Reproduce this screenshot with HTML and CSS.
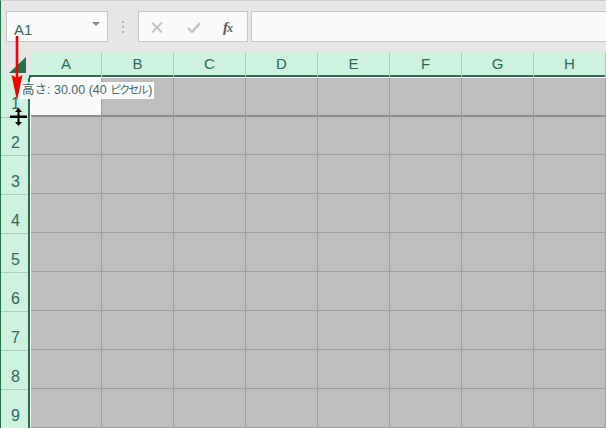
FILE: index.html
```html
<!DOCTYPE html>
<html lang="ja">
<head>
<meta charset="utf-8">
<title>Excel</title>
<link rel="stylesheet" href="styles.css">
</head>
<body>
<div class="app">
  <div class="formula-bar">
    <div class="name-box"><span>A1</span><i class="caret"></i></div>
    <svg class="grip" width="3" height="12" viewBox="0 0 3 12"><path d="M0 0h2v2H0zM0 5h2v2H0zM0 10h2v2H0z" fill="#b4b4b4"/></svg>
    <div class="fx-buttons">
      <svg class="cancel" width="12" height="11" viewBox="0 0 12 11"><path d="M1 .5 11 10.500M11 .5 1 10.500" stroke="#c4c4c4" stroke-width="2" fill="none"/></svg>
      <svg class="enter" width="14" height="11" viewBox="0 0 14 11"><path d="M1 6 5 10 13 1" stroke="#c4c4c4" stroke-width="2.400" fill="none"/></svg>
      <span class="fx">f<span class="fx-x">x</span></span>
    </div>
    <div class="formula-input"></div>
  </div>
  <div class="sheet">
    <div class="corner"><svg width="17" height="16" viewBox="0 0 17 16"><path d="M17 0V16H0Z" fill="#217346"/></svg></div>
    <div class="col">A</div><div class="col">B</div><div class="col">C</div><div class="col">D</div><div class="col">E</div><div class="col">F</div><div class="col">G</div><div class="col">H</div>

    <div class="row first">1</div>
    <div class="cell active r1"></div><div class="cell r1"></div><div class="cell r1"></div><div class="cell r1"></div><div class="cell r1"></div><div class="cell r1"></div><div class="cell r1"></div><div class="cell r1"></div>

    <div class="row">2</div>
    <div class="cell"></div><div class="cell"></div><div class="cell"></div><div class="cell"></div><div class="cell"></div><div class="cell"></div><div class="cell"></div><div class="cell"></div>
    <div class="row">3</div>
    <div class="cell"></div><div class="cell"></div><div class="cell"></div><div class="cell"></div><div class="cell"></div><div class="cell"></div><div class="cell"></div><div class="cell"></div>
    <div class="row">4</div>
    <div class="cell"></div><div class="cell"></div><div class="cell"></div><div class="cell"></div><div class="cell"></div><div class="cell"></div><div class="cell"></div><div class="cell"></div>
    <div class="row">5</div>
    <div class="cell"></div><div class="cell"></div><div class="cell"></div><div class="cell"></div><div class="cell"></div><div class="cell"></div><div class="cell"></div><div class="cell"></div>
    <div class="row">6</div>
    <div class="cell"></div><div class="cell"></div><div class="cell"></div><div class="cell"></div><div class="cell"></div><div class="cell"></div><div class="cell"></div><div class="cell"></div>
    <div class="row">7</div>
    <div class="cell"></div><div class="cell"></div><div class="cell"></div><div class="cell"></div><div class="cell"></div><div class="cell"></div><div class="cell"></div><div class="cell"></div>
    <div class="row">8</div>
    <div class="cell"></div><div class="cell"></div><div class="cell"></div><div class="cell"></div><div class="cell"></div><div class="cell"></div><div class="cell"></div><div class="cell"></div>
    <div class="row">9</div>
    <div class="cell"></div><div class="cell"></div><div class="cell"></div><div class="cell"></div><div class="cell"></div><div class="cell"></div><div class="cell"></div><div class="cell"></div>
  </div>
  <div class="tooltip">高さ: 30.00 (40 <span class="kana">ピクセル</span>)</div>
  <svg class="arrow" width="12" height="65" viewBox="0 0 12 65"><path d="M4.700 0h2.600v42h-2.600z" fill="#f00000"/><path d="M.5 39 6 64.500 11.500 39 6 42Z" fill="#f00000"/></svg>
  <svg class="cursor" width="17" height="18" viewBox="0 0 17 18"><path d="M8.500 0 12 4H9.500V7.500H17V10H9.500V14H12L8.500 18 5 14H7.500V10H0V7.500H7.500V4H5Z" fill="#000"/></svg>
</div>
</body>
</html>
```
FILE: styles.css
```css
* { box-sizing: border-box; }
html, body { margin: 0; padding: 0; }
body { width: 606px; height: 428px; overflow: hidden; background: #e6e6e6; font-family: "Liberation Sans", "Noto Sans CJK JP", sans-serif; }
.app { position: relative; width: 606px; height: 428px; overflow: hidden; border-top: 1px solid #cfcfcf; border-left: 1px solid #217346; }
.formula-bar { height: 51px; display: flex; align-items: flex-start; padding: 10px 0 0 5px; }
.name-box { width: 102px; height: 31px; background: #fafafa; border: 1px solid #c6c6c6; display: flex; align-items: center; justify-content: space-between; padding: 5px 8px 0 7px; color: #3a6a5c; font-size: 15px; }
.caret { width: 0; height: 0; border-left: 4px solid transparent; border-right: 4px solid transparent; border-top: 4px solid #8a8a8a; margin-top: -10px; margin-right: -1px; }
.grip { margin: 10px 13px 0 14px; flex: none; }
.fx-buttons { width: 110px; height: 31px; background: #fafafa; border: 1px solid #c6c6c6; display: flex; align-items: center; padding: 1px 0 0 12px; }
.enter { margin-left: 24px; }
.fx { margin-left: 22px; font-family: "Liberation Serif", serif; font-style: italic; font-weight: 700; font-size: 15px; color: #5a5a5a; line-height: 1; }
.fx-x { font-size: 12px; margin-left: -1px; }
.formula-input { flex: 1; height: 31px; margin-left: 3px; background: #fafafa; border: 1px solid #c6c6c6; border-right: 0; }
.sheet { display: grid; grid-template-columns: 30px 71px repeat(7, 72px); grid-template-rows: 26px 39px 38px repeat(7, 39px); background: #bebebe; }
.corner { background: linear-gradient(#217346, #217346) right bottom / 2px 3px no-repeat, linear-gradient(#cff1df, #cff1df) left bottom / 100% 3px no-repeat, #e6e6e6; display: flex; justify-content: flex-end; align-items: flex-start; padding: 5px 5px 0 0; }
.col { background: #cff1df; border-right: 1px solid #b5c9bd; border-bottom: 1px solid #fff; box-shadow: inset 0 -2px 0 #2c6e4d; color: #2b6a5c; font-size: 15px; display: flex; align-items: center; justify-content: center; padding-bottom: 2px; }
.row { background: #cff1df; border-right: 1px solid #fff; box-shadow: inset -2px 0 0 #217346, inset 0 1px 0 #b5c9bd; color: #2b6a5c; font-size: 16px; display: flex; align-items: center; justify-content: center; padding: 14px 0 0 0; }
.row.first { box-shadow: inset -2px 0 0 #217346; padding-top: 12px; }
.cell { background: #bebebe; border-right: 1px solid #9e9e9e; border-bottom: 1px solid #9e9e9e; }
.cell.r1 { border-bottom: 2px solid #8f8f8f; }
.cell.active { background: #fafafa; }
.tooltip { position: absolute; left: 19px; top: 81px; width: 134px; height: 17px; padding-left: 2px; background: #fafafa; color: #3d6a66; font-size: 12.500px; line-height: 17px; white-space: nowrap; }
.kana { font-size: 11px; letter-spacing: -2px; margin-right: 2px; }
.arrow { position: absolute; left: 10px; top: 35px; }
.cursor { position: absolute; left: 9px; top: 107px; }
```
